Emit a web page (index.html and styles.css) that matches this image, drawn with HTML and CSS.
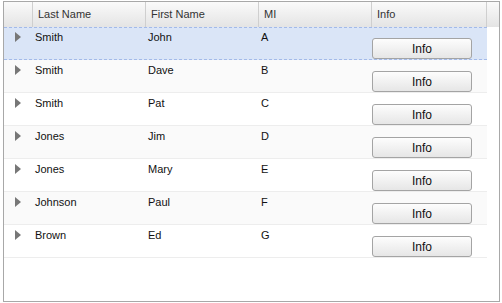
FILE: index.html
```html
<!DOCTYPE html>
<html lang="en">
<head>
    <meta charset="UTF-8">
    <title>People Grid</title>
    <link rel="stylesheet" href="styles.css">
</head>
<body>

    <div class="grid">
        <div class="grid-header">
            <div class="hd hd-expander"></div>
            <div class="hd col-name">Last Name</div>
            <div class="hd col-name">First Name</div>
            <div class="hd col-name">MI</div>
            <div class="hd col-info">Info</div>
            <div class="hd hd-filler"></div>
        </div>

        <div class="grid-body">
            <div class="row selected">
                <div class="cell expander"><span class="arrow"></span></div>
                <div class="cell col-name">Smith</div>
                <div class="cell col-name">John</div>
                <div class="cell col-name">A</div>
                <div class="cell col-info"><button class="info-button">Info</button></div>
            </div>
            <div class="row alt">
                <div class="cell expander"><span class="arrow"></span></div>
                <div class="cell col-name">Smith</div>
                <div class="cell col-name">Dave</div>
                <div class="cell col-name">B</div>
                <div class="cell col-info"><button class="info-button">Info</button></div>
            </div>
            <div class="row">
                <div class="cell expander"><span class="arrow"></span></div>
                <div class="cell col-name">Smith</div>
                <div class="cell col-name">Pat</div>
                <div class="cell col-name">C</div>
                <div class="cell col-info"><button class="info-button">Info</button></div>
            </div>
            <div class="row alt">
                <div class="cell expander"><span class="arrow"></span></div>
                <div class="cell col-name">Jones</div>
                <div class="cell col-name">Jim</div>
                <div class="cell col-name">D</div>
                <div class="cell col-info"><button class="info-button">Info</button></div>
            </div>
            <div class="row">
                <div class="cell expander"><span class="arrow"></span></div>
                <div class="cell col-name">Jones</div>
                <div class="cell col-name">Mary</div>
                <div class="cell col-name">E</div>
                <div class="cell col-info"><button class="info-button">Info</button></div>
            </div>
            <div class="row alt">
                <div class="cell expander"><span class="arrow"></span></div>
                <div class="cell col-name">Johnson</div>
                <div class="cell col-name">Paul</div>
                <div class="cell col-name">F</div>
                <div class="cell col-info"><button class="info-button">Info</button></div>
            </div>
            <div class="row">
                <div class="cell expander"><span class="arrow"></span></div>
                <div class="cell col-name">Brown</div>
                <div class="cell col-name">Ed</div>
                <div class="cell col-name">G</div>
                <div class="cell col-info"><button class="info-button">Info</button></div>
            </div>
        </div>
    </div>

</body>
</html>
```

FILE: styles.css
```css
* {
    margin: 0;
    padding: 0;
    box-sizing: border-box;
}

body {
    font-family: 'Liberation Sans', Arial, sans-serif;
    font-size: 11px;
    color: #111;
    background-color: #fff;
}

.grid {
    width: 497px;
    height: 301px;
    margin: 1px 0 0 3px;
    border: 1px solid #a8a8a8;
    overflow: hidden;
}


.grid-header {
    display: flex;
    height: 25px;
    background: linear-gradient(#fafafa, #e4e4e4);
}

.hd {
    border-right: 1px solid #cfcfcf;
    padding: 6px 0 0 5px;
    color: #333;
    line-height: 13px;
}

.hd-expander {
    width: 29px;
}

.hd-filler {
    flex: 1;
    border-right: none;
}


.col-name {
    width: 113px;
}

.col-info {
    width: 115px;
}

.row {
    display: flex;
    width: 483px;
    height: 33px;
    border-top: 1px solid transparent;
    border-bottom: 1px solid #ededed;
}

.row.alt {
    background-color: #fafafa;
}

.row.selected {
    background-color: #dae5f7;
    border-top: 1px dashed #a3bae9;
    border-bottom: 1px dashed #a3bae9;
}

.cell {
    padding: 3px 0 0 2px;
    line-height: 13px;
}

.expander {
    width: 29px;
    padding: 4px 0 0 11px;
}

.arrow {
    display: block;
    width: 0;
    height: 0;
    border-left: 6px solid #777;
    border-top: 5px solid transparent;
    border-bottom: 5px solid transparent;
}

.cell.col-info {
    padding: 10px 0 0 0;
}

.info-button {
    display: block;
    width: 100px;
    height: 21px;
    border: 1px solid #a4a4a4;
    border-radius: 3px;
    background: linear-gradient(#fdfdfd, #e6e6e6);
    font-family: 'Liberation Sans', Arial, sans-serif;
    font-size: 12px;
    color: #111;
    cursor: pointer;
}
```
